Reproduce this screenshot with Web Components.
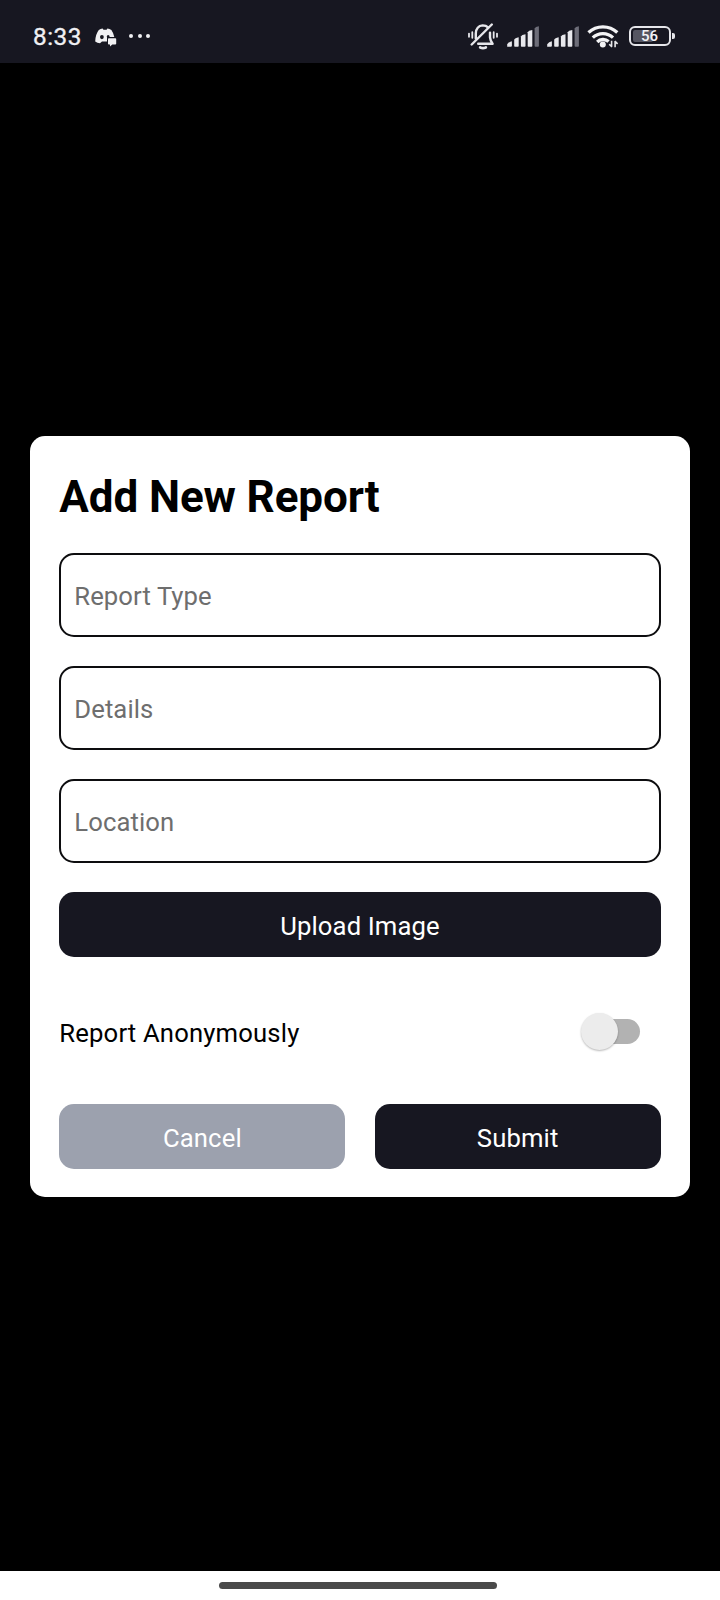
<!DOCTYPE html>
<html lang="en">
<head>
<meta charset="utf-8">
<title>Add New Report</title>
<style>
html, body { margin: 0; height: 100%; background: #000; }
body { font-family: Roboto, "Liberation Sans", sans-serif; }
</style>
</head>
<body>
<report-screen></report-screen>
<script>
const define = (name, html) => customElements.define(name, class extends HTMLElement {
  constructor() {
    super();
    this.attachShadow({ mode: 'open' }).innerHTML = html;
  }
});

define('signal-bars', `
<style>:host{display:block;width:32px;height:22px} svg{display:block}</style>
<svg width="32" height="22" viewBox="0 0 32 22">
  <g fill="#e8e8ec">
    <path d="M0.2 20.8V18.3Q1.8 15.6 4.9 15.2V19.8Q4.9 20.8 3.9 20.8Z"/>
    <path d="M7.2 20V13.8Q7.8 11.8 11.7 11.2V20Q11.7 20.8 10.9 20.8H8Q7.2 20.8 7.2 20Z"/>
    <path d="M13.9 20V10.4Q14.6 8.8 18.5 8.2V20Q18.5 20.8 17.7 20.8H14.7Q13.9 20.8 13.9 20Z"/>
    <path d="M20.7 20V6.2Q21.4 4.6 25.3 4V20Q25.3 20.8 24.5 20.8H21.5Q20.7 20.8 20.7 20Z"/>
  </g>
  <path d="M27.6 20V2.4Q28.2 0.8 31.9 0.3V20Q31.9 20.8 31.1 20.8H28.4Q27.6 20.8 27.6 20Z" fill="#6d6d78"/>
</svg>`);

define('silent-icon', `
<style>:host{display:block;width:32px;height:28px} svg{display:block}</style>
<svg width="32" height="28" viewBox="0 0 32 28" fill="none" stroke="#e6e6ea" stroke-width="2.4" stroke-linecap="round" stroke-linejoin="round">
  <path d="M8.8 15.4V10.5Q9.2 3 15.7 2.4Q19.1 2.4 21 4.3M23 9.6V14.3Q23.3 17.8 25.6 20.7H11.2"/>
  <path d="M4.7 21.5L24.8 1.5"/>
  <path d="M13.2 24.4Q16 25.7 18.8 24.4" stroke-width="2.8"/>
  <path d="M5.3 9.2V14.8M2 10.6V13.8M26.7 9.2V14.8M30 10.6V13.8" stroke-width="1.8"/>
</svg>`);

define('wifi-icon', `
<style>:host{display:block;width:32px;height:26px} svg{display:block}</style>
<svg width="32" height="26" viewBox="0 0 32 26">
  <g fill="none" stroke="#f3f3f5" stroke-width="3.3">
    <path d="M1.5 9.5A21 21 0 0 1 30.3 9.5"/>
    <path d="M5.8 14.6A14.6 14.6 0 0 1 26 14.6"/>
    <path d="M10.2 19A8.2 8.2 0 0 1 21.6 18.6"/>
  </g>
  <circle cx="15.8" cy="21.6" r="3" fill="#f3f3f5"/>
  <path d="M24.6 17.8V23.8M25 24L22.2 21.2M28.1 24.2V18M27.8 18L30.6 20.9" fill="none" stroke="#e6e6e9" stroke-width="1.6"/>
</svg>`);

define('battery-icon', `
<style>
:host{display:flex;align-items:center;gap:1.3px;height:20px}
.shell{box-sizing:border-box;width:42px;height:20px;border:2px solid #e6e6ea;border-radius:6px;padding:2px}
.level{height:100%;width:20px;background:#565661;border-radius:2px;display:flex;align-items:center}
b{width:33px;flex:none;text-align:center;font:500 15px/14px Roboto,"Liberation Sans",sans-serif;color:#f3f3f5}
i{width:2.6px;height:6px;background:#e6e6ea;border-radius:0 2px 2px 0}
</style>
<div class="shell"><div class="level"><b>56</b></div></div><i></i>`);

define('chat-icon', `
<style>:host{display:block;width:22px;height:19px} svg{display:block}</style>
<svg width="22" height="19" viewBox="0 0 22 19">
  <path fill="#f1f1f3" fill-rule="evenodd" d="M0.2 13.5Q0.3 6.5 3.8 1.9Q5.4 0.9 7.6 0.6L8.5 1.7H11.6L12.4 0.6Q14.6 0.9 16.4 1.9Q18.5 4.8 19.3 9H12V13.5H7L5 15.2Q2.3 15 0.2 13.5ZM6.9 7A1.9 2.1 0 1 0 6.9 11.2A1.9 2.1 0 1 0 6.9 7ZM13.1 6.9Q11.8 7 11.7 9H14.7Q14.6 7 13.1 6.9Z"/>
  <path fill="#f1f1f3" d="M13.8 10.2H20.3Q21.2 10.2 21.2 11V15.7Q21.2 16.5 20.3 16.5H17.3L15 18.6V16.5H13.8Q13 16.5 13 15.7V11Q13 10.2 13.8 10.2Z"/>
</svg>`);

define('status-bar', `
<style>
:host{display:flex;box-sizing:border-box;height:62.5px;padding:0 45px 0 33px;background:#171721;align-items:flex-start;color:#f0f0f3}
time{width:47px;font-size:24.3px;line-height:28px;font-weight:400;letter-spacing:.5px;margin-top:23px;-webkit-text-stroke:.35px #f0f0f3}
chat-icon{margin:27.5px 0 0 15px}
.more{display:flex;gap:4.2px;margin:34px 0 0 12.4px}
.more i{width:4px;height:4px;border-radius:50%;background:#f0f0f3}
.right{display:flex;margin-left:auto}
silent-icon{margin-top:23px}
signal-bars{margin:26px 0 0 8px}
wifi-icon{margin:23px 0 0 8px}
battery-icon{margin:26px 0 0 10px}
</style>
<time>8:33</time><chat-icon></chat-icon><span class="more"><i></i><i></i><i></i></span>
<div class="right"><silent-icon></silent-icon><signal-bars></signal-bars><signal-bars></signal-bars><wifi-icon></wifi-icon><battery-icon></battery-icon></div>`);

define('text-field', `
<style>
:host{display:block;box-sizing:border-box;height:83.7px;border:2px solid #0d0d0f;border-radius:15px;padding:23.9px 13px 0;color:#6e6e6e;font-size:25.67px;letter-spacing:.08px;line-height:34px}
</style><slot></slot>`);

define('action-button', `
<style>
:host{display:flex;box-sizing:border-box;height:64.7px;border-radius:15px;background:var(--fill,#171721);color:#fff;font-size:25.67px;letter-spacing:.13px;line-height:34px;justify-content:center;padding-top:16.7px}
</style><slot></slot>`);

define('toggle-switch', `
<style>
:host{display:flex;align-items:center;width:60px;height:38px}
.track{width:46px;height:25px;margin-left:14px;border-radius:13px;background:#b2b2b2;display:flex;align-items:center}
.thumb{flex:none;width:37px;height:37px;margin-left:-13px;border-radius:50%;background:#ececec;box-shadow:0 1px 2px rgba(0,0,0,.28)}
</style><div class="track"><div class="thumb"></div></div>`);

define('report-dialog', `
<style>
:host{display:block;box-sizing:border-box;width:660px;height:761px;padding:35px 29.3px 0;border-radius:15px;background:#fff;color:#000}
h1{margin:0 0 30.4px;font-size:44px;line-height:52px;font-weight:700;letter-spacing:-.1px}
.fields{display:grid;gap:29.3px}
.anon{display:flex;align-items:center;height:40px;margin-top:54px;padding-right:20.7px;font-size:25.67px;letter-spacing:.16px}
.anon span{padding-top:3px}
toggle-switch{margin-left:auto}
.actions{display:grid;grid-template-columns:1fr 1fr;gap:29.3px;margin-top:53.3px}
.cancel{--fill:#9ca1ae}
</style>
<h1><slot name="title"></slot></h1>
<div class="fields"><text-field>Report Type</text-field><text-field>Details</text-field><text-field>Location</text-field><action-button>Upload Image</action-button></div>
<div class="anon"><span>Report Anonymously</span><toggle-switch></toggle-switch></div>
<div class="actions"><action-button class="cancel">Cancel</action-button><action-button>Submit</action-button></div>`);

define('gesture-bar', `
<style>
:host{display:flex;box-sizing:border-box;height:29.3px;background:#fff;justify-content:center;padding:11.3px 4px 0 0}
i{width:278px;height:7px;border-radius:4px;background:#4a4a4a}
</style><i></i>`);

define('report-screen', `
<style>
:host{display:flex;flex-direction:column;height:1600px;width:720px;background:#000;overflow:hidden}
main{flex:1;display:flex;justify-content:center;align-items:flex-start;padding-top:373.5px}
</style>
<status-bar></status-bar>
<main><report-dialog><span slot="title">Add New Report</span></report-dialog></main>
<gesture-bar></gesture-bar>`);
</script>
</body>
</html>
